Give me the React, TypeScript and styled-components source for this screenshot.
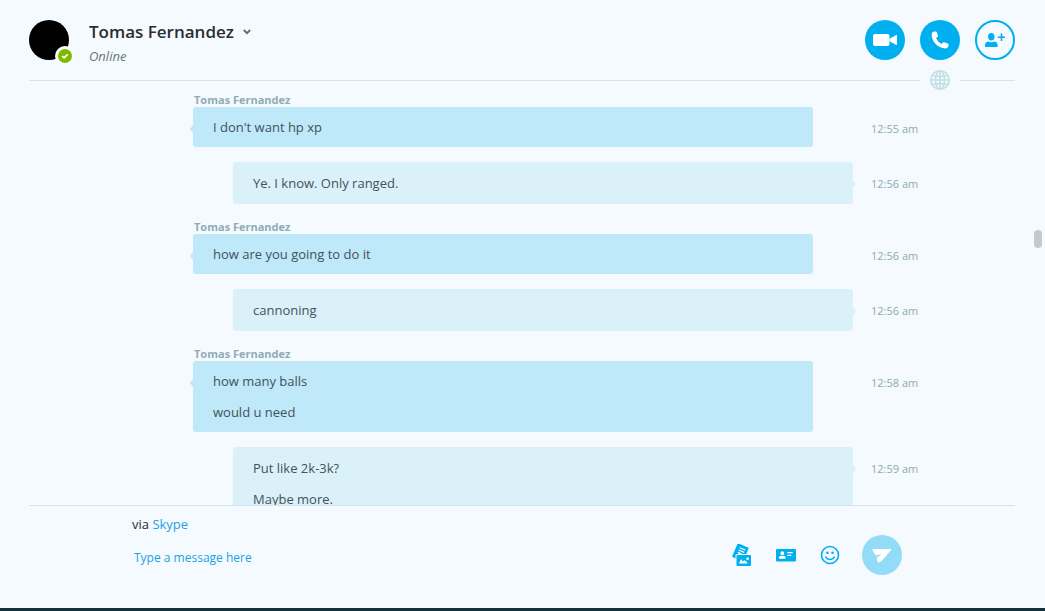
import React from 'react';
import styled, { createGlobalStyle } from 'styled-components';

const GlobalStyle = createGlobalStyle`
  *, *::before, *::after { box-sizing: border-box; }
  body {
    margin: 0;
    background: #f4fafd;
    color: #43525a;
    font-family: "Open Sans", "Noto Sans", sans-serif;
    font-size: 13px;
    line-height: 20px;
  }
  h1, h2, p, ol { margin: 0; padding: 0; }
  button, input { font: inherit; color: inherit; }
`;

const Shell = styled.div`
  display: flex;
  flex-direction: column;
  height: 100vh;
  border-bottom: 3px solid #143039;
`;

const Header = styled.header`
  display: flex;
  align-items: flex-start;
  padding: 20px 30px 4px 29px;
`;

const Avatar = styled.div`
  position: relative;
  width: 40px;
  height: 40px;
  border-radius: 50%;
  background: #000;
`;

const Presence = styled.svg`
  position: absolute;
  right: -6px;
  bottom: -6px;
`;

const Identity = styled.div`
  flex: 1;
  padding-left: 20px;
`;

const Name = styled.h1`
  font-size: 17px;
  font-weight: 600;
  line-height: 24px;
  color: #2b2c33;
`;

const NameButton = styled.button`
  display: flex;
  align-items: center;
  gap: 9px;
  padding: 0;
  border: 0;
  background: none;
  cursor: pointer;
`;

const Status = styled.p`
  padding-top: 2px;
  font-style: italic;
  color: #66757e;
`;

const Actions = styled.div`
  display: flex;
  gap: 15px;
`;

const RoundButton = styled.button<{ $tone: 'solid' | 'outline' | 'soft' }>`
  display: grid;
  place-items: center;
  width: 40px;
  height: 40px;
  padding: 0;
  border-radius: 50%;
  border: ${(p) => (p.$tone === 'outline' ? '2px solid #00aff0' : '0')};
  background: ${(p) => ({ solid: '#00aff0', outline: 'transparent', soft: '#93dcf8' })[p.$tone]};
  color: ${(p) => (p.$tone === 'outline' ? '#00aff0' : '#fff')};
  cursor: pointer;
`;

const Divider = styled.div`
  display: flex;
  align-items: center;
  padding: 0 30px 0 29px;
`;

const Rule = styled.span<{ $short?: boolean }>`
  flex: ${(p) => (p.$short ? '0 0 55px' : '1')};
  height: 1px;
  background: #d2e5ee;
`;

const GlobeSlot = styled.span`
  display: grid;
  place-items: center;
  width: 40px;
  height: 20px;
  color: #c1dde7;
`;

const Conversation = styled.main`
  position: relative;
  display: flex;
  flex: 1;
  min-height: 0;
`;

const MessageList = styled.ol`
  display: flex;
  flex: 1;
  flex-direction: column;
  gap: 15px;
  padding: 2px 29px 0 30px;
  list-style: none;
  overflow-y: auto;
  scrollbar-width: none;
`;

const ScrollThumb = styled.span`
  position: absolute;
  top: 140px;
  right: 3px;
  width: 8px;
  height: 18px;
  border-radius: 4px;
  background: #c6c8ca;
`;

const MessageRow = styled.li`
  display: grid;
  grid-template-columns: 1fr minmax(0, 660px) 1fr;
`;

const Sender = styled.h2`
  grid-column: 2;
  padding-left: 1px;
  font-size: 11px;
  font-weight: 700;
  line-height: 15px;
  color: #90abb8;
`;

const Bubble = styled.div<{ $own: boolean }>`
  position: relative;
  grid-column: 2;
  margin: ${(p) => (p.$own ? '0 0 0 40px' : '0 40px 0 0')};
  padding: ${(p) => (p.$own ? '11px 20px' : '10px 20px')};
  border-radius: 3px;
  background: ${(p) => (p.$own ? '#dbf1fa' : '#bfe8f9')};

  &::after {
    content: '';
    position: absolute;
    top: 18px;
    ${(p) => (p.$own ? 'left: 100%;' : 'right: 100%;')}
    border: solid transparent;
    border-width: 4px 3px;
    ${(p) => (p.$own ? 'border-left-color: #dbf1fa; border-right-width: 0;' : 'border-right-color: #bfe8f9; border-left-width: 0;')}
  }

  p + p { margin-top: 11px; }
`;

const Time = styled.time`
  grid-column: 3;
  padding: 12px 0 0 18px;
  font-size: 11px;
  color: #8fa9b6;
`;

const Footer = styled.footer`
  margin: 0 30px 0 29px;
  border-top: 1px solid #d2e5ee;
`;

const Composer = styled.form`
  max-width: 780px;
  height: 102px;
  margin: 0 auto;
  padding: 8px 10px 0 0;
`;

const Via = styled.p`
  padding-bottom: 1px;
  color: #2b2c33;
`;

const Link = styled.a`
  color: #1ba3e6;
  text-decoration: none;
`;

const InputRow = styled.div`
  display: flex;
  align-items: center;
`;

const MessageInput = styled.input`
  flex: 1;
  min-width: 0;
  height: 40px;
  padding: 4px 2px 0;
  border: 0;
  outline: 0;
  background: none;
  font-size: 12px;
  color: #2b2c33;
  &::placeholder { color: #1ba3e6; opacity: 1; }
`;

const Tools = styled.div`
  display: flex;
  padding-right: 10px;
`;

const ToolButton = styled.button`
  display: grid;
  place-items: center;
  width: 44px;
  height: 40px;
  padding: 0;
  border: 0;
  background: none;
  color: #00aff0;
  cursor: pointer;
`;

interface Message {
  own: boolean;
  time: string;
  lines: string[];
}

const contact = 'Tomas Fernandez';

const messages: Message[] = [
  { own: false, time: '12:55 am', lines: ["I don't want hp xp"] },
  { own: true, time: '12:56 am', lines: ['Ye. I know. Only ranged.'] },
  { own: false, time: '12:56 am', lines: ['how are you going to do it'] },
  { own: true, time: '12:56 am', lines: ['cannoning'] },
  { own: false, time: '12:58 am', lines: ['how many balls', 'would u need'] },
  { own: true, time: '12:59 am', lines: ['Put like 2k-3k?', 'Maybe more.'] },
];

const CaretIcon = () => (
  <svg width="8" height="6" viewBox="0 0 8 6" fill="none" stroke="#5b6b75" strokeWidth="1.8">
    <path d="M.8 1l3.2 3.2L7.2 1" />
  </svg>
);

const VideoIcon = () => (
  <svg width="24" height="14" viewBox="0 0 24 14" fill="currentColor">
    <rect x="0" y="1" width="16.5" height="12" rx="2" />
    <path d="M17 5.6l5.8-3.4q1.2-.5 1.2.7v8.200q0 1.200-1.200.7L17 8.400z" />
  </svg>
);

const PhoneIcon = () => (
  <svg width="18" height="18" viewBox="0 0 18 18" fill="currentColor">
    <path d="M.7 3.200Q.9.900 3 .6L4.600.4Q5.700.3 6 1.400L6.900 4.700Q7.100 5.600 6.300 6.200L5 7.200Q6.700 10.900 10.700 12.900L11.900 11.600Q12.500 11 13.300 11.300L16.700 12.400Q17.700 12.800 17.600 13.800L17.400 15.300Q17 17.500 14.600 17.400C6.500 17 .4 10.200.7 3.200z" />
  </svg>
);

const AddPersonIcon = () => (
  <svg width="20" height="14" viewBox="0 0 20 14" fill="currentColor">
    <ellipse cx="6.300" cy="3.700" rx="3.200" ry="3.700" />
    <path d="M0 14v-2.500Q.2 9 3 8.500q3.300 1.600 6.600 0 2.700.5 3 3V14z" />
    <path d="M15.700.4h1.600v3h3v1.500h-3v3h-1.600v-3h-3V3.400h3z" />
  </svg>
);

const GlobeIcon = () => (
  <svg width="20" height="20" viewBox="0 0 20 20" fill="none" stroke="currentColor" strokeWidth="1.500">
    <circle cx="10" cy="10" r="9.200" strokeWidth="1.600" />
    <ellipse cx="10" cy="10" rx="4.500" ry="9.200" />
    <path d="M10 1v18M1 10h18M2.500 5.500q7.500 2.200 15 0M2.500 14.500q7.500-2.200 15 0" />
  </svg>
);

const FilesIcon = () => (
  <svg width="20" height="22" viewBox="0 0 20 22">
    <g transform="rotate(23 9 7)">
      <rect x="3" y="1" width="12" height="15" rx="1" fill="currentColor" />
      <path d="M6.500 4.500h6M6.500 7h6M6.500 9.500h4" stroke="#fff" strokeWidth="1.200" />
    </g>
    <rect x="3.500" y="10" width="16" height="12" rx="1.500" fill="#f4fafd" />
    <rect x="4.500" y="11" width="14.500" height="11" rx="1" fill="currentColor" />
    <path d="M7 19.500l1.300-3 .9-1.500 1.600 2.500 1.500-1.300 2 1.300 1.200 2z" fill="#fff" />
    <circle cx="15.600" cy="14.700" r="1.300" fill="#fff" />
  </svg>
);

const ContactCardIcon = () => (
  <svg width="20" height="14" viewBox="0 0 20 14">
    <rect y="1" width="20" height="12.500" rx="1" fill="currentColor" />
    <g fill="#fff">
      <ellipse cx="6.300" cy="5.300" rx="1.800" ry="2.100" />
      <path d="M3 10.700V9.500q.2-1.500 1.700-1.700 1.600.8 3.200 0 1.500.2 1.700 1.700v1.200z" />
      <path d="M11.300 4h5.400v1.300h-5.400zM11.300 6.700h4v1.200h-4z" />
    </g>
  </svg>
);

const SmileyIcon = () => (
  <svg width="20" height="20" viewBox="0 0 20 20" fill="none" stroke="currentColor" strokeWidth="1.600">
    <circle cx="10" cy="10" r="8.500" />
    <path d="M5.500 11.500q1.500 3 4.500 3t4.500-3" />
    <circle cx="7.400" cy="7.800" r="1.300" fill="currentColor" stroke="none" />
    <circle cx="12.600" cy="7.800" r="1.300" fill="currentColor" stroke="none" />
  </svg>
);

const SendIcon = () => (
  <svg width="20" height="16" viewBox="0 0 20 16" fill="currentColor">
    <path d="M1 2h17.800q.9.100.4.900L9.200 14.600 6.600 15.600q-.7.100-.9-.6L4.800 11.400q-.1-.6.400-.9L9.600 7.200 4.200 8.200q-.6.100-.9-.3L.5 3q-.3-.9.500-1z" />
  </svg>
);

const MessageItem = ({ message }: { message: Message }) => (
  <MessageRow>
    {!message.own && <Sender>{contact}</Sender>}
    <Bubble $own={message.own}>
      {message.lines.map((line) => (
        <p key={line}>{line}</p>
      ))}
    </Bubble>
    <Time>{message.time}</Time>
  </MessageRow>
);

export default function App() {
  return (
    <Shell>
      <GlobalStyle />
      <Header>
        <Avatar>
          <Presence width="20" height="20" viewBox="0 0 20 20">
            <circle cx="10" cy="10" r="10" fill="#f9fdff" />
            <circle cx="10" cy="10" r="7" fill="#7fba00" />
            <path d="M7.200 10.100l1.900 1.800 3.600-3.600" fill="none" stroke="#fff" strokeWidth="1.700" />
          </Presence>
        </Avatar>
        <Identity>
          <NameButton type="button">
            <Name>{contact}</Name>
            <CaretIcon />
          </NameButton>
          <Status>Online</Status>
        </Identity>
        <Actions>
          <RoundButton $tone="solid" type="button" aria-label="Video call"><VideoIcon /></RoundButton>
          <RoundButton $tone="solid" type="button" aria-label="Call"><PhoneIcon /></RoundButton>
          <RoundButton $tone="outline" type="button" aria-label="Add people"><AddPersonIcon /></RoundButton>
        </Actions>
      </Header>
      <Divider>
        <Rule />
        <GlobeSlot><GlobeIcon /></GlobeSlot>
        <Rule $short />
      </Divider>
      <Conversation>
        <MessageList>
          {messages.map((message, index) => (
            <MessageItem key={index} message={message} />
          ))}
        </MessageList>
        <ScrollThumb />
      </Conversation>
      <Footer>
        <Composer onSubmit={(event) => event.preventDefault()}>
          <Via>via <Link href="#skype">Skype</Link></Via>
          <InputRow>
            <MessageInput type="text" aria-label="Message" placeholder="Type a message here" />
            <Tools>
              <ToolButton type="button" aria-label="Send files"><FilesIcon /></ToolButton>
              <ToolButton type="button" aria-label="Send contact"><ContactCardIcon /></ToolButton>
              <ToolButton type="button" aria-label="Emoticons"><SmileyIcon /></ToolButton>
            </Tools>
            <RoundButton $tone="soft" type="submit" aria-label="Send message"><SendIcon /></RoundButton>
          </InputRow>
        </Composer>
      </Footer>
    </Shell>
  );
}
